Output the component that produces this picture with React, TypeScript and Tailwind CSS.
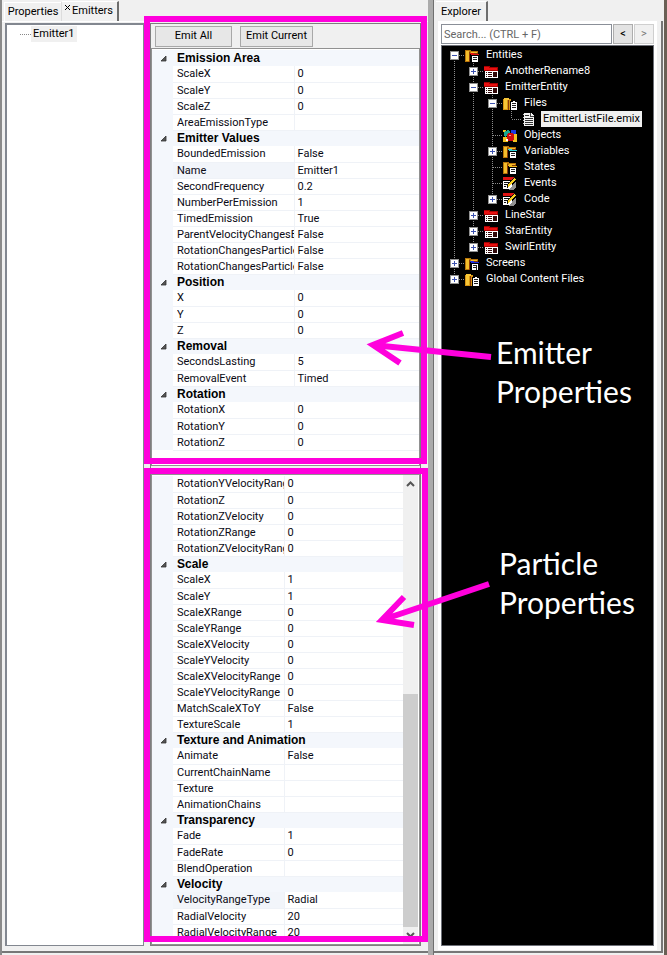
import React from "react";

type Row = { name: string; value?: string; category?: boolean; selected?: boolean };

const cat = (name: string): Row => ({ name, category: true });
const prop = (name: string, value = "", selected = false): Row => ({ name, value, selected });

const emitterRows: Row[] = [
  cat("Emission Area"),
  prop("ScaleX", "0"),
  prop("ScaleY", "0"),
  prop("ScaleZ", "0"),
  prop("AreaEmissionType"),
  cat("Emitter Values"),
  prop("BoundedEmission", "False"),
  prop("Name", "Emitter1", true),
  prop("SecondFrequency", "0.2"),
  prop("NumberPerEmission", "1"),
  prop("TimedEmission", "True"),
  prop("ParentVelocityChangesE", "False"),
  prop("RotationChangesParticle", "False"),
  prop("RotationChangesParticle", "False"),
  cat("Position"),
  prop("X", "0"),
  prop("Y", "0"),
  prop("Z", "0"),
  cat("Removal"),
  prop("SecondsLasting", "5"),
  prop("RemovalEvent", "Timed"),
  cat("Rotation"),
  prop("RotationX", "0"),
  prop("RotationY", "0"),
  prop("RotationZ", "0"),
];

const particleRows: Row[] = [
  prop("RotationYVelocityRang", "0"),
  prop("RotationZ", "0"),
  prop("RotationZVelocity", "0"),
  prop("RotationZRange", "0"),
  prop("RotationZVelocityRang", "0"),
  cat("Scale"),
  prop("ScaleX", "1"),
  prop("ScaleY", "1"),
  prop("ScaleXRange", "0"),
  prop("ScaleYRange", "0"),
  prop("ScaleXVelocity", "0"),
  prop("ScaleYVelocity", "0"),
  prop("ScaleXVelocityRange", "0"),
  prop("ScaleYVelocityRange", "0"),
  prop("MatchScaleXToY", "False"),
  prop("TextureScale", "1"),
  cat("Texture and Animation"),
  prop("Animate", "False"),
  prop("CurrentChainName"),
  prop("Texture"),
  prop("AnimationChains"),
  cat("Transparency"),
  prop("Fade", "1"),
  prop("FadeRate", "0"),
  prop("BlendOperation"),
  cat("Velocity"),
  prop("VelocityRangeType", "Radial", true),
  prop("RadialVelocity", "20"),
  prop("RadialVelocityRange", "20"),
];

function PropertyTable({ rows, label, nameWidth }: { rows: Row[]; label: string; nameWidth: string }) {
  return (
    <table aria-label={label} className="w-full table-fixed border-collapse text-[11px] leading-[15px] text-[#0a0a14]">
      <colgroup>
        <col className="w-[21px]" />
        <col className={nameWidth} />
        <col />
      </colgroup>
      <tbody>
        {rows.map((r, i) =>
          r.category ? (
            <tr key={i} className="h-4 bg-[#f4f7fc]">
              <td className="p-0">
                <svg viewBox="0 0 7 7" className="ml-2 size-[7px]" aria-hidden="true">
                  <path d="M6 1V6H1Z" fill="#555" stroke="#333" strokeWidth="0.8" />
                </svg>
              </td>
              <th
                colSpan={2}
                scope="colgroup"
                className="p-0 pl-1 text-left font-['Liberation_Sans',Arial,sans-serif] text-[12px] font-bold text-black"
              >
                {r.name}
              </th>
            </tr>
          ) : (
            <tr key={i} className="h-4">
              <td className="bg-[#f4f7fc] p-0" />
              <th
                scope="row"
                className={
                  "border-r border-b border-[#eff2f7] p-0 pl-1 text-left font-normal whitespace-nowrap " +
                  (r.selected ? "bg-[#f2f5fa]" : "bg-white")
                }
              >
                <div className="overflow-hidden">{r.name}</div>
              </th>
              <td className="border-b border-[#eff2f7] bg-white p-0 pl-[3px] whitespace-nowrap">{r.value}</td>
            </tr>
          ),
        )}
      </tbody>
    </table>
  );
}

type IconName = "entities" | "entity" | "files" | "file" | "objects" | "variables" | "states" | "script" | "screens" | "global";

function SmallList({ bar }: { bar: string }) {
  return (
    <>
      <path d="M6 7h9v8H6z" fill="#000" />
      <path d="M7 7h8v1H7z" fill={bar} />
      <path d="M6 6h4v1H6z" fill={bar} />
      <path d="M8 9h6v6H8z" fill="#fff" />
      <path d="M9 10h4v1H9zM9 12h4v1H9z" fill="#222" />
    </>
  );
}

function Folder() {
  return (
    <>
      <path d="M1 3h5l1 1h7v3H6v8H1z" fill="#b87408" />
      <path d="M2 4h3v10H2zM7 5h6v1H7z" fill="#f3bd2c" />
      <path d="M5 5h1v10H5zM6 6h8v1H6z" fill="#8a3a08" />
    </>
  );
}

function Doc() {
  return (
    <>
      <path d="M8 6h8v9H8z" fill="#000" />
      <path d="M9 7h2V6h2v1h2v8H9z" fill="#fff" />
      <path d="M10 8h4v1h-4zM10 10h4v1h-4zM10 12h4v1h-4z" fill="#222" />
    </>
  );
}

function TreeIcon({ name }: { name: IconName }) {
  let art: React.ReactNode;
  switch (name) {
    case "entities":
      art = (
        <>
          <Folder />
          <SmallList bar="#e01010" />
        </>
      );
      break;
    case "variables":
      art = (
        <>
          <Folder />
          <SmallList bar="#2fd0d8" />
        </>
      );
      break;
    case "states":
      art = (
        <>
          <Folder />
          <SmallList bar="#f0b818" />
        </>
      );
      break;
    case "screens":
      art = (
        <>
          <Folder />
          <SmallList bar="#2030e0" />
          <path d="M12 10h1v5h-1z" fill="#222" />
        </>
      );
      break;
    case "files":
    case "global":
      art = (
        <>
          <path d="M1 4h8v11H1z" fill="#d89412" />
          <path d="M2 3h5v2H2zM2 5h3v9H2z" fill="#f6c638" />
          <path d="M6 5h1v10H6z" fill="#8a3a08" />
          <Doc />
        </>
      );
      break;
    case "entity":
      art = (
        <>
          <path d="M1 3h5l1 1h8v4H1z" fill="#a80000" />
          <path d="M1 4h5v1h8v2H1z" fill="#e81010" />
          <path d="M2 8h13v7H2z" fill="#fff" />
          <path d="M3 9h1v1H3zM5 9h4v1H5zM3 11h1v1H3zM5 11h4v1H5zM3 13h1v1H3zM5 13h4v1H5zM10 9h4v5h-4z" fill="#300808" />
        </>
      );
      break;
    case "file":
      art = (
        <>
          <path d="M3 2h7l3 3v10H3z" fill="#f4f4f4" />
          <path d="M9 2h1v3h3v1H9z" fill="#444" />
          <path d="M4 4h4v1H4zM4 7h8v1H4zM4 9h8v1H4zM4 11h8v1H4zM4 13h8v1H4z" fill="#333" />
          <path d="M2 3h1v1H2zM2 6h1v1H2zM2 9h1v1H2zM2 12h1v1H2z" fill="#ccc" />
        </>
      );
      break;
    case "objects":
      art = (
        <>
          <path d="M1 3h3v2H1zM1 10h5v5H1zM12 11h3v4h-4z" fill="#f0c020" />
          <path d="M2 7V5l4-2 2 1v2L3 10z" fill="#18a890" />
          <path d="M9 3h5v5H9z" fill="#1838e0" />
          <path d="M12 7h3v4h-3z" fill="#f0c020" />
          <circle cx="8.500" cy="10" r="4" fill="#d00c0c" />
          <path d="M7 8h2v1H7z" fill="#ff9a8a" />
          <path d="M4 12h2v2H4z" fill="#fff" />
        </>
      );
      break;
    case "script":
      art = (
        <>
          <path d="M1 2h12v3H1z" fill="#e01414" />
          <path d="M1 6h9v8H1z" fill="#fff" />
          <path d="M2 7h5v1H2zM2 9h3v1H2zM2 11h2v1H2z" fill="#111" />
          <path d="M7 15l7-9v7l-3 2z" fill="#909090" />
          <path d="M5 13V10l7-8 2 2-7 8z" fill="#111" />
          <path d="M6 12v-2l6-7 2 1-7 8z" fill="#f8d020" />
        </>
      );
      break;
  }
  return (
    <svg viewBox="0 0 16 16" className="size-4 shrink-0" shapeRendering="crispEdges" aria-hidden="true">
      {art}
    </svg>
  );
}

type Node = { name: string; icon: IconName; children?: Node[]; open?: boolean; selected?: boolean };

const tree: Node[] = [
  {
    name: "Entities",
    icon: "entities",
    open: true,
    children: [
      { name: "AnotherRename8", icon: "entity", children: [] },
      {
        name: "EmitterEntity",
        icon: "entity",
        open: true,
        children: [
          {
            name: "Files",
            icon: "files",
            open: true,
            children: [{ name: "EmitterListFile.emix", icon: "file", selected: true }],
          },
          { name: "Objects", icon: "objects" },
          { name: "Variables", icon: "variables", children: [] },
          { name: "States", icon: "states" },
          { name: "Events", icon: "script" },
          { name: "Code", icon: "script", children: [] },
        ],
      },
      { name: "LineStar", icon: "entity", children: [] },
      { name: "StarEntity", icon: "entity", children: [] },
      { name: "SwirlEntity", icon: "entity", children: [] },
    ],
  },
  { name: "Screens", icon: "screens", children: [] },
  { name: "Global Content Files", icon: "global", children: [] },
];

function Lines({ d }: { d: string }) {
  return (
    <svg viewBox="0 0 19 16" className="col-start-1 row-start-1 h-4 w-[19px]" aria-hidden="true">
      <path d={d} stroke="#8c8c8c" strokeWidth="1" strokeDasharray="1 1" fill="none" shapeRendering="crispEdges" />
    </svg>
  );
}

function TreeRows({ nodes, trail }: { nodes: Node[]; trail: boolean[] }) {
  return (
    <ul>
      {nodes.map((n, i) => {
        const last = i === nodes.length - 1;
        const first = i === 0 && trail.length === 0;
        const top = first ? 8 : 0;
        const bottom = last ? 8 : 16;
        return (
          <li key={n.name}>
            <div className="flex h-4 items-center">
              {trail.map((through, t) => (
                <div key={t} className="grid">
                  <Lines d={through ? "M9.5 0V16" : ""} />
                </div>
              ))}
              <div className="grid justify-items-center">
                <Lines d={`M9.5 ${top}V${bottom}M10 8.5H19`} />
                {n.children && (
                  <button
                    type="button"
                    aria-label={(n.open ? "Collapse " : "Expand ") + n.name}
                    className="col-start-1 row-start-1 mt-1 size-[9px] border border-[#919191] bg-white"
                  >
                    <svg viewBox="0 0 7 7" className="block size-[7px]" shapeRendering="crispEdges">
                      <path d={n.open ? "M1 3h5v1H1z" : "M1 3h5v1H1zM3 1h1v5H3z"} fill="#3c52b0" />
                    </svg>
                  </button>
                )}
              </div>
              <TreeIcon name={n.icon} />
              <span
                className={
                  "ml-1 px-[2px] leading-4 whitespace-nowrap " + (n.selected ? "bg-[#f0f0f0] text-black" : "text-white")
                }
              >
                {n.name}
              </span>
            </div>
            {n.open && n.children && <TreeRows nodes={n.children} trail={[...trail, !last]} />}
          </li>
        );
      })}
    </ul>
  );
}

function EmitterDock() {
  return (
    <section className="relative flex min-w-0 flex-col border-l-2 border-[#8a8a8a] bg-[#f0f0f0]">
      <div role="tablist" className="flex h-[21px] shrink-0 items-end pl-[2px] leading-[18px]">
        <button type="button" role="tab" aria-selected="false" className="h-[19px] w-[57px] border-t border-l border-white">
          Properties
        </button>
        <button
          type="button"
          role="tab"
          aria-selected="true"
          className="flex h-5 w-[58px] gap-px border-t border-r-2 border-l border-t-white border-r-[#6d6d6d] border-l-[#dcdcdc]"
        >
          <svg viewBox="0 0 7 7" className="mt-[2px] ml-[2px] size-[7px] shrink-0" aria-hidden="true">
            <path d="M1 1l5 5M6 1L1 6" stroke="#000" />
          </svg>
          <span>Emitters</span>
        </button>
      </div>
      <div className="mb-[2px] flex min-h-0 flex-1 gap-[6px] border-t border-b-2 border-t-white border-b-[#777] pt-px pr-[7px] pb-[5px] pl-[3px]">
        <div className="w-[139px] shrink-0 border-2 border-r border-b border-[#828790] bg-white pt-px leading-4">
          <div className="flex items-center pl-[13px]">
            <span className="w-[11px] border-t border-dotted border-[#888]" />
            <span className="bg-[#f0f0f0] px-[2px]">Emitter1</span>
          </div>
        </div>
        <div className="flex min-w-0 flex-1 flex-col border border-[#7d7d7d]">
          <div className="flex h-6 shrink-0 items-center gap-2 pl-1 leading-4">
            <button type="button" className="h-[21px] w-[77px] border border-[#a8a8a8] bg-[#e7e7e7]">
              Emit All
            </button>
            <button type="button" className="h-[21px] w-[73px] border border-[#a8a8a8] bg-[#e7e7e7]">
              Emit Current
            </button>
          </div>
          <div className="h-[418px] shrink-0 border border-[#919191] bg-white pt-px">
            <PropertyTable rows={emitterRows} label="Emitter properties" nameWidth="w-[121px]" />
          </div>
          <div className="mt-2 flex min-h-0 flex-1 overflow-hidden border border-[#919191] bg-white">
            <div className="h-full min-w-0 flex-1 overflow-hidden bg-white pt-px">
              <PropertyTable rows={particleRows} label="Particle properties" nameWidth="w-[111px]" />
            </div>
            <div className="mr-px flex w-[15px] shrink-0 flex-col items-center bg-[#f0f0f0]">
              <svg viewBox="0 0 15 17" className="h-[17px] w-[15px] shrink-0" aria-hidden="true">
                <path d="M4 11l3.500-3.500L11 11" fill="none" stroke="#555" strokeWidth="2" />
              </svg>
              <div className="flex-[203]" />
              <div className="w-full flex-[234] bg-[#cdcdcd]" />
              <svg viewBox="0 0 15 17" className="h-[17px] w-[15px] shrink-0" aria-hidden="true">
                <path d="M4 6l3.500 3.500L11 6" fill="none" stroke="#555" strokeWidth="2" />
              </svg>
            </div>
          </div>
        </div>
      </div>
      <div aria-hidden="true" className="absolute top-4 right-px left-[142px] h-[448px] border-6 border-[#ff00dc]" />
      <div aria-hidden="true" className="absolute top-[468px] right-0 bottom-[13px] left-[142px] border-6 border-[#ff00dc]" />
    </section>
  );
}

function ExplorerDock() {
  return (
    <section className="flex min-w-0 flex-col border-r-3 border-[#6a6055] bg-[#f0f0f0] pr-px">
      <div role="tablist" className="flex h-[21px] shrink-0 items-end pl-[2px] leading-[18px]">
        <button
          type="button"
          role="tab"
          aria-selected="true"
          className="h-5 w-[52px] border-t border-r-2 border-t-white border-r-[#6d6d6d] text-center"
        >
          Explorer
        </button>
      </div>
      <div className="mb-[2px] flex min-h-0 flex-1 flex-col border-r-2 border-b-2 border-[#777] pr-1 pb-px pl-1">
        <div className="flex min-h-0 flex-1 flex-col bg-white px-[3px] pt-[3px] pb-1">
          <div className="flex h-5 shrink-0 gap-px">
            <input
              type="text"
              aria-label="Search"
              placeholder="Search... (CTRL + F)"
              className="h-5 min-w-0 flex-1 border border-[#8a8f98] bg-white px-[2px] placeholder:text-[#666]"
            />
            <button type="button" className="h-5 w-5 border border-[#adadad] bg-[#e3e3e3] leading-4">
              &lt;
            </button>
            <button type="button" disabled className="h-5 w-5 border border-[#cfcfcf] bg-[#f0f0f0] leading-4 text-[#777]">
              &gt;
            </button>
          </div>
          <div className="mt-px min-h-0 flex-1 border border-[#6d7078] bg-black pt-px pl-[3px]">
            <TreeRows nodes={tree} trail={[]} />
          </div>
        </div>
      </div>
    </section>
  );
}

export default function App() {
  return (
    <main className="relative grid h-screen min-h-[955px] grid-cols-[428fr_6px_233fr] overflow-hidden bg-[#f0f0f0] font-['Roboto','Liberation_Sans',sans-serif] text-[11px] text-black">
      <EmitterDock />
      <div className="border-r border-[#6f6f6f] bg-[#ababab]" />
      <ExplorerDock />
      <svg
        viewBox="0 0 667 955"
        className="pointer-events-none absolute top-0 left-0 h-[955px] w-[667px]"
        fill="none"
        stroke="#ff00dc"
        strokeWidth="6"
        aria-hidden="true"
      >
        <path d="M403 333L373 345L400 363M373 345L491 357" />
        <path d="M404 597L382 620L414 625M382 620L489 584" />
      </svg>
      <p className="absolute top-[333px] left-[496px] font-['Lato',sans-serif] text-[30px] leading-[39px] text-white">
        Emitter
        <br />
        Properties
      </p>
      <p className="absolute top-[544px] left-[499px] font-['Lato',sans-serif] text-[30px] leading-[39px] text-white">
        Particle
        <br />
        Properties
      </p>
    </main>
  );
}
